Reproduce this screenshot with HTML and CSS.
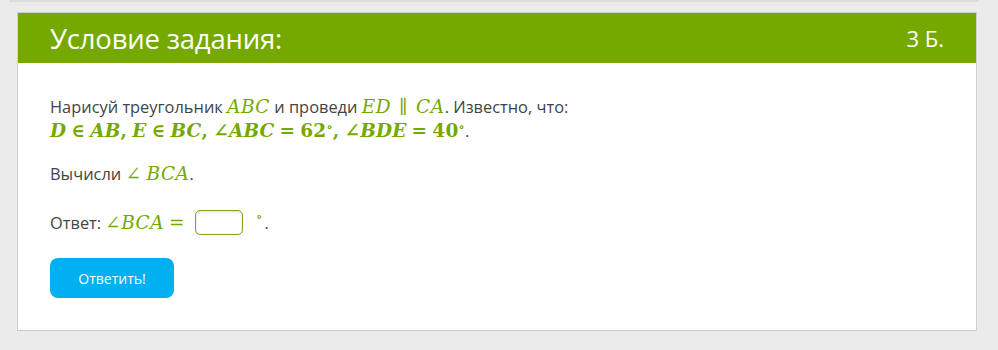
FILE: index.html
```html
<!DOCTYPE html>
<html lang="ru">
<head>
<meta charset="utf-8">
<link rel="stylesheet" href="styles.css">
</head>
<body>
<div class="topstrip"></div>
<div class="card">
  <div class="card-head">
    <span class="title">Условие задания:</span>
    <span class="points">3 Б.</span>
  </div>
  <div class="card-body">
    <p class="para">Нарисуй треугольник <span class="m">ABC</span> и проведи <span class="m">ED<span class="rel wide">∥</span>CA</span>. Известно, что:<br>
    <span class="m b">D<span class="rel">∈</span>AB<span class="pun">,</span>E<span class="rel">∈</span>BC<span class="pun">,</span><span class="r">∠</span>ABC<span class="rel">=</span><span class="r">62<sup>∘</sup></span><span class="pun">,</span><span class="r">∠</span>BDE<span class="rel">=</span><span class="r">40<sup>∘</sup></span></span>.</p>
    <p class="para">Вычисли <span class="m"><span class="r ang">∠</span>BCA</span>.</p>
    <p class="para answer">Ответ: <span class="m"><span class="r">∠</span>BCA<span class="rel">=</span></span><span class="inp"></span><span class="deg">∘</span>.</p>
    <button class="btn">Ответить!</button>
  </div>
</div>
</body>
</html>
```
FILE: styles.css
```css
html, body {
  margin: 0;
  padding: 0;
  background: #ebebeb;
}
body {
  padding: 0 21px 0 17px;
  font-family: "Open Sans", sans-serif;
}
.topstrip {
  height: 2px;
  background: #dcdcdc;
  margin: 0 0 10px -8px;
  width: 970px;
}
.card {
  width: 958px;
  border: 1px solid #cfcfcf;
  background: #fff;
}
.card-head {
  height: 50px;
  background: #76a900;
  color: #fff;
  display: flex;
  justify-content: space-between;
  align-items: center;
  padding: 0 32px;
}
.title {
  font-size: 27.5px;
  letter-spacing: -0.2px;
}
.points {
  font-size: 22px;
}
.card-body {
  padding: 32px 32px 32px;
  color: #444;
  font-size: 16.4px;
  line-height: 24px;
}
.para {
  margin: 0 0 19px;
}
.m {
  font-family: "DejaVu Serif", serif;
  font-style: italic;
  font-size: 18.5px;
  letter-spacing: 0.5px;
  color: #76a900;
}
.m.b {
  font-weight: bold;
  font-size: 18.5px;
  letter-spacing: 0.2px;
}
.m .r, .m .rel, .m .pun {
  font-style: normal;
}
.m .rel {
  margin: 0 5px;
}
.m .rel.wide {
  margin: 0 8px;
}
.m .pun {
  margin-right: 5px;
}
.m .ang {
  margin-right: 5px;
}
.m sup {
  font-size: 12px;
  vertical-align: 6px;
  line-height: 0;
}
.answer {
  display: flex;
  align-items: center;
  margin: 24px 0 23px;
}
.answer .m {
  margin-left: 4px;
}
.inp {
  display: inline-block;
  width: 46px;
  height: 23px;
  border: 1px solid #7aaa10;
  border-radius: 5px;
  box-shadow: inset 0 1px 3px rgba(0,0,0,0.15);
  margin: 0 13px 0 5px;
}
.deg {
  font-family: "DejaVu Serif", serif;
  color: #76a900;
  font-size: 13px;
  position: relative;
  top: -6px;
  margin-right: 2px;
}
.btn {
  display: block;
  width: 124px;
  height: 40px;
  border: none;
  border-radius: 8px;
  background: #00b0f0;
  color: #fff;
  font-family: "Open Sans", sans-serif;
  font-size: 14px;
}
```
